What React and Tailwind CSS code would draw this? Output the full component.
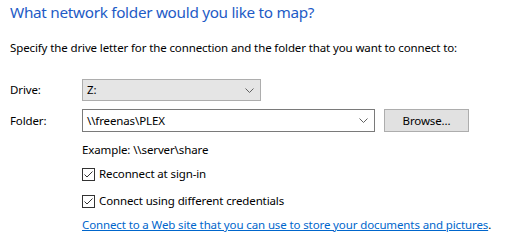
import React from 'react';

const Chevron = () => (
  <svg width="9" height="5" viewBox="0 0 9 5" className="shrink-0">
    <path d="M0.5 0.5 L4.5 4.5 L8.5 0.5" fill="none" stroke="#606060" strokeWidth="1" />
  </svg>
);

const CheckBox = ({ label }) => (
  <label className="flex items-center gap-[4px] h-[16px]">
    <span className="w-[13px] h-[13px] border border-[#333333] bg-white flex items-center justify-center">
      <svg width="11" height="11" viewBox="0 0 11 11">
        <path d="M1.5 5.5 L4 8 L9.5 2.5" fill="none" stroke="#333333" strokeWidth="1" />
      </svg>
    </span>
    <span>{label}</span>
  </label>
);

export default function App() {
  return (
    <div
      className="w-[522px] h-[241px] bg-white px-[10px] pt-[2px] text-[11.5px] tracking-[-0.12px] text-black overflow-hidden"
      style={{ fontFamily: '"Noto Sans", "Open Sans", sans-serif' }}
    >
      <h1 className="text-[15.3px] leading-[21px] text-[#1e5bc6] tracking-[-0.3px]">
        What network folder would you like to map?
      </h1>
      <p className="mt-[17px] leading-[16px]">
        Specify the drive letter for the connection and the folder that you want to connect to:
      </p>

      <div className="mt-[23px] flex items-center">
        <span className="w-[72px]">Drive:</span>
        <div className="w-[179px] h-[22px] bg-[#e5e5e5] border border-[#adadad] flex items-center justify-between pl-[4px] pr-[6px]">
          <span>Z:</span>
          <Chevron />
        </div>
      </div>

      <div className="mt-[8px] flex items-center">
        <span className="w-[72px]">Folder:</span>
        <div className="w-[293px] h-[23px] bg-white border border-[#7a7a7a] flex items-center justify-between pl-[4px] pr-[6px]">
          <span>\\freenas\PLEX</span>
          <Chevron />
        </div>
        <button className="ml-[9px] w-[85px] h-[23px] bg-[#e1e1e1] border border-[#adadad] leading-[16px]">
          Browse...
        </button>
      </div>

      <div className="pl-[72px]">
        <p className="mt-[10px] leading-[16px]">Example: \\server\share</p>
        <div className="mt-[8px]">
          <CheckBox label="Reconnect at sign-in" />
        </div>
        <div className="mt-[11px]">
          <CheckBox label="Connect using different credentials" />
        </div>
        <p className="mt-[8px] leading-[16px] whitespace-nowrap">
          <a href="#" className="text-[#0066cc] underline">
            Connect to a Web site that you can use to store your documents and pictures
          </a>
          .
        </p>
      </div>
    </div>
  );
}
